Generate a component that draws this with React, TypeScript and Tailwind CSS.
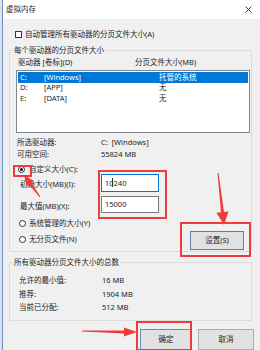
function Radio({ checked }: { checked?: boolean }) {
  return (
    <span className="flex h-[7px] w-[7px] shrink-0 items-center justify-center rounded-full border border-[#333] bg-white">
      {checked && <span className="block h-[3px] w-[3px] rounded-full bg-[#111]"></span>}
    </span>
  );
}

function Annotations() {
  return (
    <div className="pointer-events-none absolute inset-0">
      <div className="absolute left-[13px] top-[165px] h-[12px] w-[19px] border-2 border-[#ee3b3b]"></div>
      <div className="absolute left-[98px] top-[170px] h-[49px] w-[69px] border-2 border-[#ee3b3b]"></div>
      <div className="absolute left-[180px] top-[222px] h-[35px] w-[71px] border-2 border-[#ee3b3b]"></div>
      <div className="absolute left-[136px] top-[321px] h-[30px] w-[56px] border-2 border-[#ee3b3b]"></div>
      {/* mouse text cursor */}
      <div className="absolute left-[112px] top-[178px] h-[9px] w-px bg-[#333]"></div>
      <svg className="absolute inset-0" width="260" height="350" viewBox="0 0 260 350">
        <polygon
          fill="#ee3b3b"
          points="24,175 34.1,181.2 31.7,183 40.4,196.7 39.6,197.3 29.3,184.8 26.9,186.6"
        />
        <polygon
          fill="#ee3b3b"
          points="224,225 228.5,211.4 224,211.9 218.5,172.9 217.5,173.1 221,212.3 216.5,212.8"
        />
        <polygon
          fill="#ee3b3b"
          points="137,332 124,327.5 124,330.5 82,330.6 82,331.4 124,333.5 124,336.5"
        />
      </svg>
    </div>
  );
}

export default function App() {
  const rows = [
    { d: "C:", v: "[Windows]", s: "托管的系统", sel: true },
    { d: "D:", v: "[APP]", s: "无" },
    { d: "E:", v: "[DATA]", s: "无" },
  ];

  return (
    <div className="relative flex h-[350px] w-[260px] overflow-hidden bg-[#dfe4ea] font-['Noto_Sans','Noto_Sans_CJK_SC',sans-serif] text-[7.5px] leading-[11px] text-[#1e1e1e]">
      <div className="w-[2px] shrink-0 bg-[#dde2e8]"></div>
      <div className="flex flex-1 flex-col border-l border-[#6b8fbf]">
        {/* title bar */}
        <div className="flex h-[19px] shrink-0 items-center justify-between bg-white pl-[3px] pr-[8px]">
          <span>虚拟内存</span>
          <svg width="7" height="7" viewBox="0 0 7 7">
            <path d="M0.5 0.5 L6.5 6.5 M6.5 0.5 L0.5 6.5" stroke="#222" strokeWidth="0.9" />
          </svg>
        </div>

        <div className="flex flex-1 flex-col bg-[#f0f0f0] pl-[6px] pr-[8px]">
          <div className="mt-[12px] flex h-[7px] shrink-0 items-center gap-[3px] pl-[6px]">
            <span className="block h-[7px] w-[7px] border border-[#333] bg-white"></span>
            <span>自动管理所有驱动器的分页文件大小(A)</span>
          </div>

          {/* group 1 */}
          <fieldset className="mt-[7px] shrink-0 border border-[#dcdcdc]">
            <legend className="ml-[3px] px-[1px]">每个驱动器的分页文件大小</legend>
            <div className="flex h-[12px] items-center pl-[8px]">
              <span className="w-[117px]">驱动器 [卷标](D)</span>
              <span>分页文件大小(MB)</span>
            </div>
            <div className="ml-[6px] mr-[1px] mt-[2px] h-[63px] border border-[#828790] bg-white p-px">
              {rows.map((r) => (
                <div
                  key={r.d}
                  className={
                    r.sel
                      ? "flex h-[10.5px] items-center bg-[#0078d7] pl-[2px] text-white"
                      : "flex h-[10.5px] items-center pl-[2px]"
                  }
                >
                  <span className="w-[24px]">{r.d}</span>
                  <span className="w-[115px]">{r.v}</span>
                  <span>{r.s}</span>
                </div>
              ))}
            </div>

            <div className="mt-[3px] flex h-[12px] items-center pl-[7px]">
              <span className="w-[84px]">所选驱动器:</span>
              <span>C:&nbsp; [Windows]</span>
            </div>
            <div className="flex h-[12px] items-center pl-[7px]">
              <span className="w-[84px]">可用空间:</span>
              <span>55824 MB</span>
            </div>

            <div className="mt-[5px] flex h-[9px] items-center gap-[4px] pl-[8px]">
              <Radio checked />
              <span>自定义大小(C):</span>
            </div>
            <div className="flex h-[18px] items-center pl-[10px]">
              <span className="w-[81px] pt-[3px]">初始大小(MB)(I):</span>
              <div className="flex h-[18px] w-[58px] items-center border border-[#0078d7] bg-white pl-[3px]">
                10240
              </div>
            </div>
            <div className="mt-[4px] flex h-[17px] items-center pl-[10px]">
              <span className="w-[81px] pt-[3px]">最大值(MB)(X):</span>
              <div className="flex h-[17px] w-[58px] items-center border border-[#7a7a7a] bg-white pl-[3px]">
                15000
              </div>
            </div>

            <div className="flex items-end justify-between pb-[6px]">
              <div className="flex flex-col gap-[4px] pl-[9px] pt-[4px]">
                <div className="flex h-[12px] items-center gap-[3px]">
                  <Radio />
                  <span>系统管理的大小(Y)</span>
                </div>
                <div className="flex h-[12px] items-center gap-[3px]">
                  <Radio />
                  <span>无分页文件(N)</span>
                </div>
              </div>
              <button className="-mb-[5px] mr-[7px] flex h-[19px] w-[54px] items-center justify-center border border-[#5b7fa8] bg-[#e1e1e1]">
                设置(S)
              </button>
            </div>
          </fieldset>

          {/* group 2 */}
          <fieldset className="mt-[5px] shrink-0 border border-[#dcdcdc] pb-[5px] pt-[6px]">
            <legend className="ml-[3px] px-[1px]">所有驱动器分页文件大小的总数</legend>
            <div className="flex h-[13.5px] items-center pl-[9px]">
              <span className="w-[83px]">允许的最小值:</span>
              <span>16 MB</span>
            </div>
            <div className="flex h-[13.5px] items-center pl-[9px]">
              <span className="w-[83px]">推荐:</span>
              <span>1904 MB</span>
            </div>
            <div className="flex h-[13.5px] items-center pl-[9px]">
              <span className="w-[83px]">当前已分配:</span>
              <span>512 MB</span>
            </div>
          </fieldset>

          <div className="-mr-[2px] mt-[8px] flex shrink-0 justify-end gap-[6px]">
            <button className="flex h-[21px] w-[52px] items-center justify-center border border-[#6f8db3] bg-[#e1e1e1]">
              确定
            </button>
            <button className="flex h-[21px] w-[56px] items-center justify-center border border-[#adadad] bg-[#e1e1e1]">
              取消
            </button>
          </div>
        </div>
      </div>
      <Annotations />
    </div>
  );
}
